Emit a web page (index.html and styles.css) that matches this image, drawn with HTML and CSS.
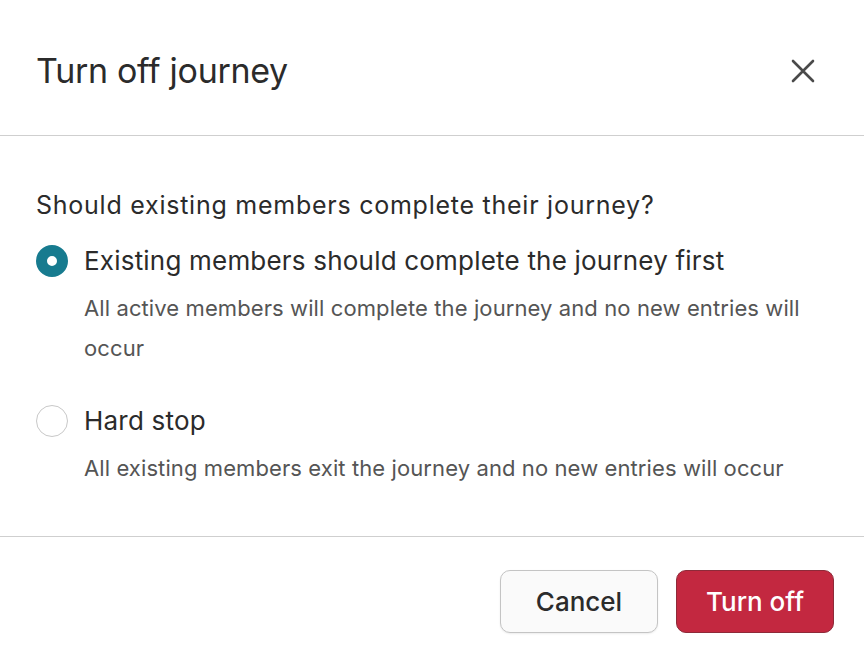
FILE: index.html
```html
<!DOCTYPE html>
<html>
<head>
<meta charset="utf-8">
<link rel="stylesheet" href="styles.css">
</head>
<body>
<div class="modal">
  <header class="modal-header">
    <h1 class="title">Turn off journey</h1>
    <button class="close" aria-label="Close">
      <svg width="24" height="24" viewBox="0 0 24 24"><path d="M2 2L22 22M22 2L2 22" stroke="#4a4a4a" stroke-width="2.6" stroke-linecap="round"/></svg>
    </button>
  </header>
  <section class="modal-body">
    <p class="question">Should existing members complete their journey?</p>
    <div class="option">
      <span class="radio checked"></span>
      <div class="option-text">
        <div class="label">Existing members should complete the journey first</div>
        <div class="desc">All active members will complete the journey and no new entries will occur</div>
      </div>
    </div>
    <div class="option">
      <span class="radio"></span>
      <div class="option-text">
        <div class="label">Hard stop</div>
        <div class="desc">All existing members exit the journey and no new entries will occur</div>
      </div>
    </div>
  </section>
  <footer class="modal-footer">
    <button class="btn btn-secondary">Cancel</button>
    <button class="btn btn-danger">Turn off</button>
  </footer>
</div>
</body>
</html>
```
FILE: styles.css
```css
* { box-sizing: border-box; }
html, body { margin: 0; padding: 0; background: #fff; }
body { font-family: Inter, "Noto Sans", sans-serif; color: #2b2b2b; }
.modal { width: 864px; height: 654px; display: flex; flex-direction: column; }
.modal-header {
  height: 136px;
  border-bottom: 1px solid #cfcfcf;
  display: flex; align-items: center; justify-content: space-between;
  padding: 0 49px 0 36px;
}
.title { margin: 0; font-size: 34px; font-weight: 400; letter-spacing: -0.3px; position: relative; top: 3px; color: #2b2b2b; }
.close { border: 0; background: none; padding: 0; display: flex; position: relative; top: 3px; }
.modal-body { padding: 53px 36px 0 36px; height: 401px; border-bottom: 1px solid #cfcfcf; }
.question { margin: 0 0 23px; font-size: 25px; line-height: 32px; letter-spacing: 0.75px; }
.option { display: flex; gap: 16px; margin-bottom: 36px; }
.radio { width: 32px; height: 32px; border-radius: 50%; border: 1.5px solid #c8c8c8; flex: none; margin-top: 1px; }
.radio.checked { border: 11px solid #177b8f; }
.label { font-size: 26px; line-height: 34px; letter-spacing: 0.2px; }
.desc { font-size: 22px; line-height: 40px; color: #555; margin-top: 10px; padding-right: 10px; letter-spacing: 0.1px; }
.modal-footer { flex: 1; display: flex; justify-content: flex-end; align-items: flex-start; gap: 18px; padding: 33px 30px 0 0; }
.btn { width: 158px; height: 63px; border-radius: 10px; font-family: inherit; font-size: 26px; font-weight: 500; }
.btn-secondary { background: #fafafa; border: 1px solid #c4c4c4; color: #2b2b2b; box-shadow: 0 1px 2px rgba(0,0,0,0.08); }
.btn-danger { background: #c32840; border: 1.5px solid #8e2a39; color: #fff; }
```
